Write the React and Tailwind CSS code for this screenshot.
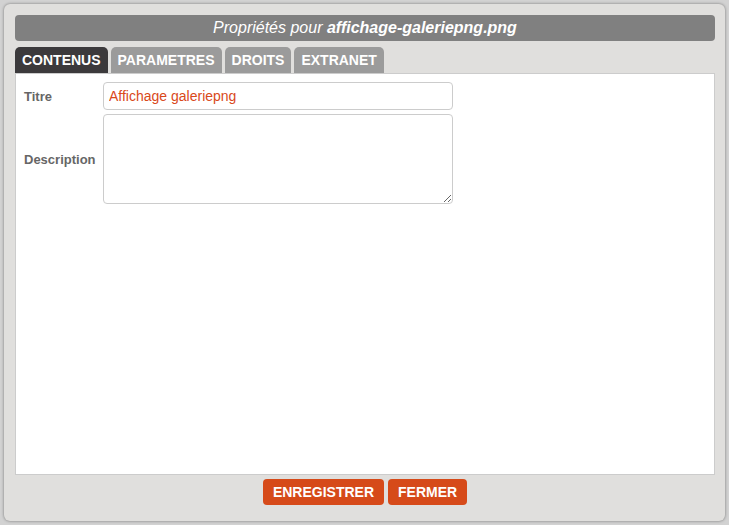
import { useState } from 'react';

const TABS = ['CONTENUS', 'PARAMETRES', 'DROITS', 'EXTRANET'];

export default function App() {
  const [active, setActive] = useState('CONTENUS');
  const [titre, setTitre] = useState('Affichage galeriepng');
  const [description, setDescription] = useState('');

  return (
    <div
      className="w-[729px] h-[525px] bg-[#d2d2d2] p-[4px] overflow-hidden"
      style={{ fontFamily: '"Liberation Sans", Arial, sans-serif' }}
    >
      <div className="w-[721px] h-[517px] bg-[#e0dfdd] rounded-[6px] shadow-[0_0_3px_rgba(0,0,0,0.45)] pl-[11px] pr-[10px] pt-[11px] flex flex-col">
        <div className="h-[26px] bg-[#808080] rounded-[4px] flex items-center justify-center text-white text-[16px] italic leading-none">
          <span>Propriétés pour&nbsp;</span>
          <span className="font-bold">affichage-galeriepng.png</span>
        </div>

        <div className="flex gap-[3px] mt-[6px] h-[26px]">
          {TABS.map((tab) => (
            <button
              key={tab}
              onClick={() => setActive(tab)}
              className={
                active === tab
                  ? 'h-[26px] px-[7px] rounded-t-[5px] bg-[#3c3a3c] text-white text-[14px] font-bold leading-none'
                  : 'h-[26px] px-[7px] rounded-t-[5px] bg-[#9b9b9b] text-white text-[14px] font-bold leading-none'
              }
            >
              {tab}
            </button>
          ))}
        </div>

        <div className="h-[402px] bg-white border border-[#cccccc] px-[8px] pt-[8px]">
          <div className="flex items-center">
            <label className="w-[79px] text-[13px] font-bold text-[#666666] pt-[1px]">Titre</label>
            <input
              value={titre}
              onChange={(e) => setTitre(e.target.value)}
              className="w-[350px] h-[28px] border border-[#cccccc] rounded-[4px] px-[5px] text-[14px] text-[#d9481a] outline-none"
            />
          </div>
          <div className="flex items-center mt-[4px]">
            <label className="w-[79px] text-[13px] font-bold text-[#666666] pt-[1px]">Description</label>
            <textarea
              value={description}
              onChange={(e) => setDescription(e.target.value)}
              className="w-[350px] h-[90px] border border-[#cccccc] rounded-[4px] px-[5px] py-[3px] text-[14px] text-[#d9481a] outline-none block"
            />
          </div>
        </div>

        <div className="flex justify-center gap-[4px] mt-[4px]">
          <button className="h-[26px] px-[10px] rounded-[4px] bg-[#d64a19] text-white text-[14px] font-bold leading-none">
            ENREGISTRER
          </button>
          <button className="h-[26px] px-[10px] rounded-[4px] bg-[#d64a19] text-white text-[14px] font-bold leading-none">
            FERMER
          </button>
        </div>
      </div>
    </div>
  );
}
